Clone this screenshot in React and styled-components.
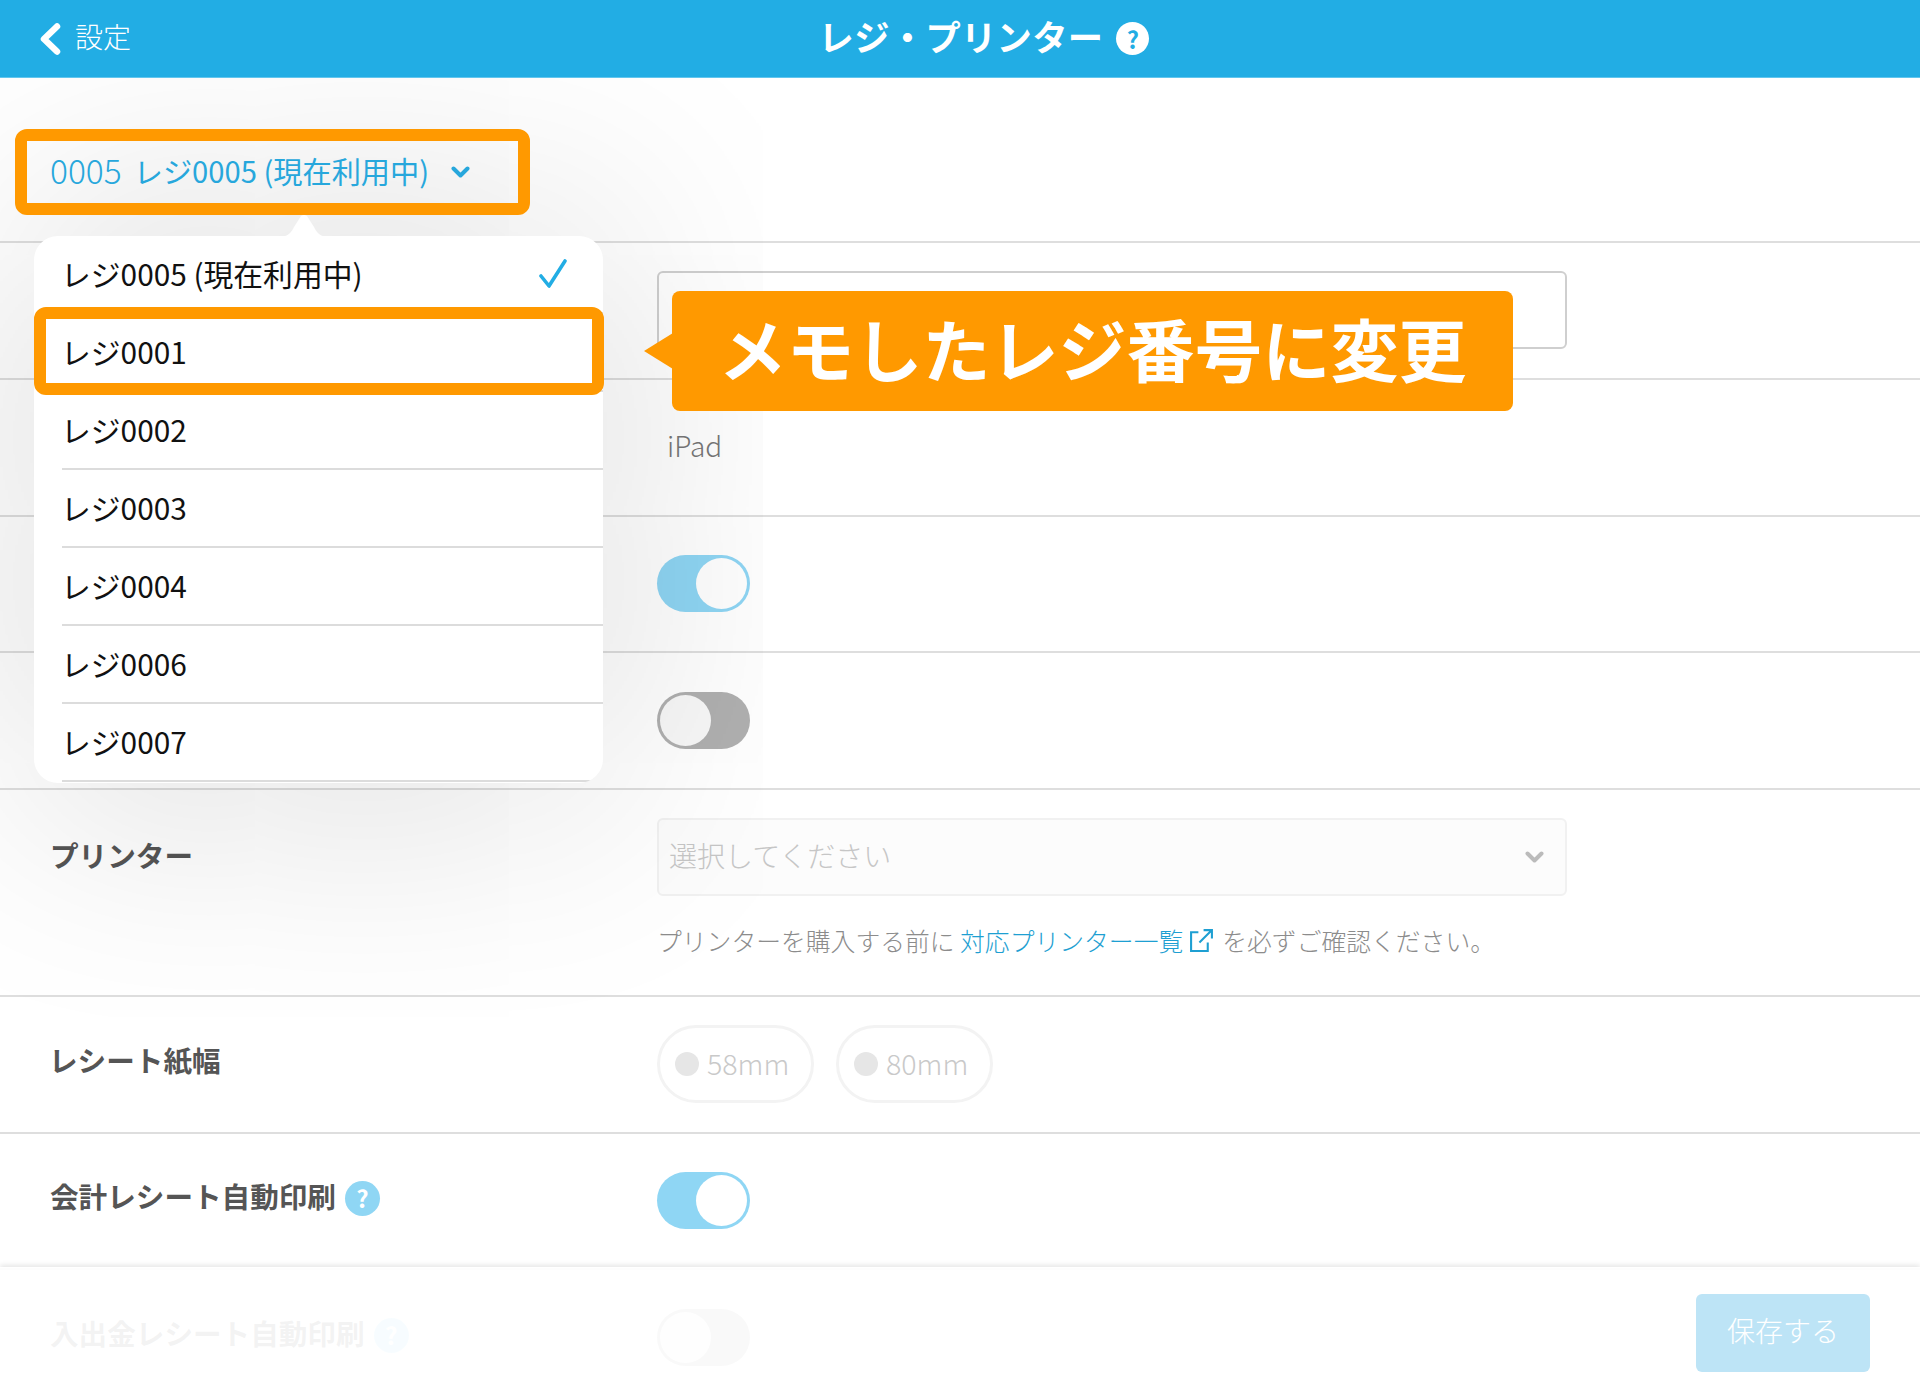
import React from "react";
import styled, { createGlobalStyle } from "styled-components";

const Global = createGlobalStyle`
  html, body { margin: 0; padding: 0; background: #fff; }
  * { box-sizing: border-box; }
  body { font-family: "Noto Sans CJK JP", "Noto Sans", sans-serif; }
`;

const Page = styled.div`
  position: relative;
  width: 1920px;
  height: 1400px;
  overflow: hidden;
  background: #fff;
`;

const Header = styled.header`
  position: relative;
  z-index: 5;
  height: 78px;
  background: #22ade4;
  border-bottom: 1px solid #62c6ee;
  display: grid;
  grid-template-columns: 1fr auto 1fr;
  align-items: center;
  color: #fff;
`;

const Back = styled.div`
  display: flex;
  align-items: center;
  gap: 13px;
  padding-left: 38px;
  font-size: 28px;
  font-weight: 300;
`;

const BackText = styled.span`
  padding-bottom: 5px;
`;

const Title = styled.div`
  display: flex;
  align-items: center;
  gap: 13px;
  padding-left: 48px;
  font-size: 35.3px;
  font-weight: 700;
  letter-spacing: 0.3px;
`;

const TitleText = styled.span`
  padding-bottom: 7px;
`;

const Help = styled.span`
  display: inline-flex;
  align-items: center;
  justify-content: center;
  flex: none;
  width: ${(p) => p.$size || 35}px;
  height: ${(p) => p.$size || 35}px;
  border-radius: 50%;
  background: ${(p) => p.$bg || "#8fd6f4"};
  color: ${(p) => p.$fg || "#fff"};
  font-size: ${(p) => (p.$size ? p.$size * 0.72 : 24)}px;
  font-weight: 700;
  line-height: 1;
  letter-spacing: 0;
`;

const SelectorBar = styled.div`
  height: 163px;
  padding: 51px 0 0 15px;
`;

const Selector = styled.div`
  position: relative;
  z-index: 4;
  width: 515px;
  height: 86px;
  border: 12px solid #ff9900;
  border-radius: 12px;
  padding-left: 23px;
  display: flex;
  align-items: center;
  color: #27a7dc;
  font-size: 29.2px;
  font-weight: 400;
`;

const SelectorCode = styled.span`
  margin-right: 12px;
  padding-bottom: 5px;
  font-size: 33.5px;
  font-weight: 300;
`;

const SelectorName = styled.span`
  padding-bottom: 5px;
`;

const SelectorChevron = styled.svg`
  margin-left: 22px;
  flex: none;
`;

const Row = styled.section`
  display: grid;
  grid-template-columns: 607px 910px;
  align-items: ${(p) => (p.$tall ? "start" : "center")};
  height: ${(p) => (p.$tall ? "206.6px" : "136.8px")};
  padding: ${(p) => (p.$tall ? "28px" : "0")} 0 0 50px;
  border-top: 2px solid #dedede;
`;

const Label = styled.div`
  display: flex;
  align-items: center;
  gap: 9px;
  font-size: 28.6px;
  font-weight: 700;
  color: #555;
  line-height: ${(p) => (p.$tall ? "74px" : "normal")};
  padding-bottom: ${(p) => (p.$tall ? "0" : "5px")};
`;

const LabelText = styled.span`
  padding-bottom: ${(p) => (p.$tall ? "0" : "5px")};
  margin-left: ${(p) => (p.$nudge ? "-1px" : "0")};
`;

const TextBox = styled.div`
  height: 78px;
  background: #fff;
  border: 2px solid #cfcfcf;
  border-radius: 6px;
`;

const Value = styled.div`
  padding: 0 0 5px 10px;
  font-size: 28px;
  font-weight: 300;
  color: #777;
`;

const Toggle = styled.div`
  position: relative;
  width: 93px;
  height: 57px;
  border-radius: 29px;
  background: ${(p) => p.$color};
`;

const Knob = styled.span`
  position: absolute;
  top: 3px;
  ${(p) => (p.$on ? "right: 3px;" : "left: 3px;")}
  width: 51px;
  height: 51px;
  border-radius: 50%;
  background: ${(p) => p.$color};
`;

const SelectBox = styled.div`
  height: 78px;
  display: flex;
  align-items: center;
  justify-content: space-between;
  padding: 0 21px 0 10px;
  background: #fcfcfc;
  border: 2px solid #f1f1f1;
  border-radius: 6px;
  font-size: 28px;
  font-weight: 300;
  color: #c6c6c6;
`;

const Placeholder = styled.span`
  padding-bottom: 4px;
`;

const Note = styled.div`
  display: flex;
  align-items: center;
  margin-top: 26px;
  font-size: 24.8px;
  font-weight: 300;
  color: #8c8c8c;
  white-space: pre;
`;

const NoteLink = styled.span`
  color: #1e9fd2;
`;

const NoteIcon = styled.svg`
  margin: 0 8px 0 6px;
  flex: none;
`;

const Pills = styled.div`
  display: flex;
  gap: 22px;
`;

const Pill = styled.div`
  display: flex;
  align-items: center;
  gap: 8px;
  width: 157px;
  height: 78px;
  padding-left: 15px;
  border: 3px solid #f3f3f3;
  border-radius: 39px;
  font-size: 28.6px;
  font-weight: 300;
  color: #c9c9c9;
`;

const PillText = styled.span`
  padding-bottom: 3px;
`;

const Dot = styled.span`
  width: 24px;
  height: 24px;
  border-radius: 50%;
  background: #e6e6e6;
`;

const Popover = styled.div`
  position: absolute;
  z-index: 3;
  left: 34px;
  top: 236px;
  width: 569px;
  height: 547px;
  background: #fff;
  border-radius: 24px;
  box-shadow: 0 0 280px rgba(0, 0, 0, 0.2);
`;

const PopoverArrow = styled.svg`
  position: absolute;
  left: 244px;
  top: -21px;
`;

const PopoverList = styled.ul`
  list-style: none;
  margin: 0;
  padding: 0;
  height: 100%;
  border-radius: 24px;
  overflow: hidden;
`;

const Item = styled.li`
  display: flex;
  align-items: center;
  justify-content: space-between;
  height: 78px;
  margin-left: 28px;
  padding: 0 35px 0 0;
  border-bottom: 2px solid #dcdcdc;
  font-size: 29.8px;
  font-weight: 400;
  color: #111;
`;

const ItemText = styled.span`
  margin-left: -1px;
  padding-bottom: 3px;
`;

const Highlight = styled.div`
  position: absolute;
  z-index: 4;
  left: 34px;
  top: 307px;
  width: 570px;
  height: 88px;
  border: 12px solid #ff9900;
  border-radius: 12px;
`;

const Callout = styled.div`
  position: absolute;
  z-index: 4;
  left: 672px;
  top: 291px;
  width: 841px;
  height: 120px;
  display: flex;
  align-items: center;
  justify-content: center;
  padding-bottom: 7px;
  background: #ff9900;
  border-radius: 8px;
  color: #fff;
  font-size: 68px;
  font-weight: 700;
  white-space: nowrap;
  &::before {
    content: "";
    position: absolute;
    left: -28px;
    top: 42px;
    border-style: solid;
    border-width: 18px 29px 18px 0;
    border-color: transparent #ff9900 transparent transparent;
  }
`;

const Footer = styled.footer`
  position: absolute;
  z-index: 2;
  left: 0;
  right: 0;
  bottom: 0;
  height: 133px;
  display: flex;
  justify-content: flex-end;
  align-items: flex-start;
  padding: 27px 50px 0 0;
  background: rgba(255, 255, 255, 0.93);
  box-shadow: 0 -2px 5px rgba(0, 0, 0, 0.1);
`;

const SaveButton = styled.button`
  width: 174px;
  height: 78px;
  padding: 0 0 7px;
  border: 0;
  border-radius: 6px;
  background: #bde4f6;
  color: #fff;
  font-family: inherit;
  font-size: 28px;
  font-weight: 300;
`;

const items = ["レジ0005 (現在利用中)", "レジ0001", "レジ0002", "レジ0003", "レジ0004", "レジ0006", "レジ0007"];

export default function App() {
  return (
    <Page>
      <Global />
      <Header>
        <Back>
          <svg width="24" height="32" viewBox="0 0 24 32" fill="none">
            <path d="M19 3.5 L6 16 L19 28.5" stroke="#fff" strokeWidth="6.5" strokeLinecap="round" strokeLinejoin="round" />
          </svg>
          <BackText>設定</BackText>
        </Back>
        <Title>
          <TitleText>レジ・プリンター</TitleText>
          <Help $size={33} $bg="#fff" $fg="#22ade4">?</Help>
        </Title>
        <span />
      </Header>

      <SelectorBar>
        <Selector>
          <SelectorCode>0005</SelectorCode>
          <SelectorName>レジ0005 (現在利用中)</SelectorName>
          <SelectorChevron width="19" height="13" viewBox="0 0 19 13" fill="none">
            <path d="M2.5 2.5 L9.5 9.5 L16.5 2.5" stroke="#27a7dc" strokeWidth="4" strokeLinecap="round" strokeLinejoin="round" />
          </SelectorChevron>
        </Selector>
      </SelectorBar>

      <Row>
        <span />
        <TextBox />
      </Row>
      <Row>
        <span />
        <Value>iPad</Value>
      </Row>
      <Row>
        <span />
        <Toggle $color="#8fd6f4">
          <Knob $on $color="#fff" />
        </Toggle>
      </Row>
      <Row>
        <span />
        <Toggle $color="#b0b0b0">
          <Knob $color="#f8f8f8" />
        </Toggle>
      </Row>
      <Row $tall>
        <Label $tall>
          <LabelText $tall>プリンター</LabelText>
        </Label>
        <div>
          <SelectBox>
            <Placeholder>選択してください</Placeholder>
            <svg width="19" height="13" viewBox="0 0 19 13" fill="none">
              <path d="M2.5 2.5 L9.5 9.5 L16.5 2.5" stroke="#bbb" strokeWidth="4" strokeLinecap="round" strokeLinejoin="round" />
            </svg>
          </SelectBox>
          <Note>
            <span>プリンターを購入する前に </span>
            <NoteLink>対応プリンター一覧</NoteLink>
            <NoteIcon width="25" height="25" viewBox="0 0 24 24" fill="none" stroke="#1e9fd2" strokeWidth="2">
              <path d="M9 4 H2 V22 H18 V14" />
              <path d="M10 14 L22 2 M14 2 H22 V10" />
            </NoteIcon>
            <span>を必ずご確認ください。</span>
          </Note>
        </div>
      </Row>
      <Row>
        <Label>
          <LabelText $nudge>レシート紙幅</LabelText>
        </Label>
        <Pills>
          <Pill><Dot /><PillText>58mm</PillText></Pill>
          <Pill><Dot /><PillText>80mm</PillText></Pill>
        </Pills>
      </Row>
      <Row>
        <Label>
          <LabelText>会計レシート自動印刷</LabelText>
          <Help>?</Help>
        </Label>
        <Toggle $color="#8fd6f4">
          <Knob $on $color="#fff" />
        </Toggle>
      </Row>
      <Row>
        <Label>
          <LabelText>入出金レシート自動印刷</LabelText>
          <Help>?</Help>
        </Label>
        <Toggle $color="#a9a9a9">
          <Knob $color="#f1f1f1" />
        </Toggle>
      </Row>

      <Popover>
        <PopoverArrow width="52" height="22" viewBox="0 0 52 22">
          <path d="M0 22 C10 22 13 18 16 12 L23 1 C24.5 -0.3 27.5 -0.3 29 1 L36 12 C39 18 42 22 52 22 Z" fill="#fff" />
        </PopoverArrow>
        <PopoverList>
          {items.map((t, i) => (
            <Item key={t}>
              <ItemText>{t}</ItemText>
              {i === 0 && (
                <svg width="30" height="30" viewBox="0 0 30 30" fill="none">
                  <path d="M3 17 L11 27 L27 2" stroke="#22ade4" strokeWidth="3.6" strokeLinecap="round" strokeLinejoin="round" />
                </svg>
              )}
            </Item>
          ))}
        </PopoverList>
      </Popover>
      <Highlight />
      <Callout>メモしたレジ番号に変更</Callout>

      <Footer>
        <SaveButton>保存する</SaveButton>
      </Footer>
    </Page>
  );
}
